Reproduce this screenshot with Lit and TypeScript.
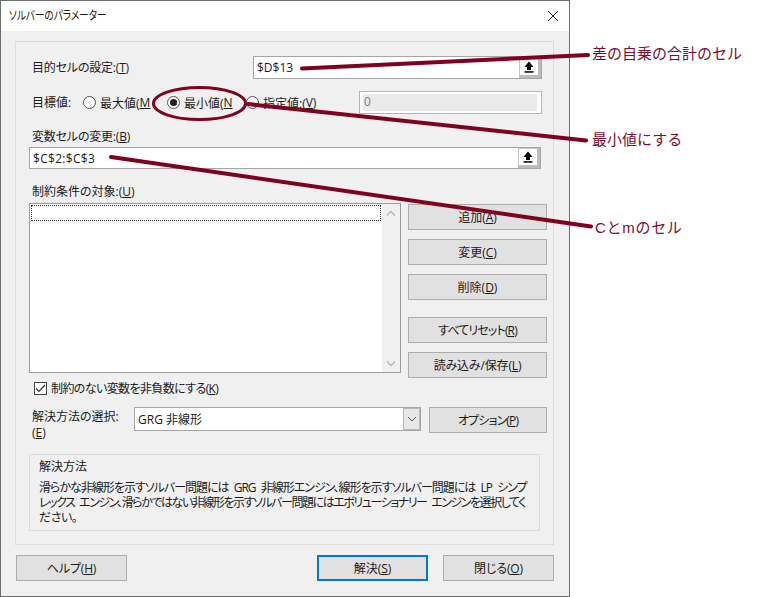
import { LitElement, html, css, svg } from "lit";
import { customElement } from "lit/decorators.js";

const upIcon = html`<svg class="up" width="10" height="12" viewBox="0 0 10 12"><path d="M5 0.5 L9.5 6 H7 V9 H3 V6 H0.5 Z" fill="#000"/><rect x="0.5" y="10.2" width="9" height="1.5" fill="#000"/></svg>`;

@customElement("app-root")
export class AppRoot extends LitElement {
  static styles = css`
    :host { display: block; width: 766px; height: 597px; position: relative; overflow: hidden; background: #fff;
      font-family: "Open Sans", "Noto Sans CJK JP", sans-serif; font-size: 12px; color: #1a1a1a; font-feature-settings: "palt"; }
    * { box-sizing: border-box; }
    .window { width: 570px; height: 597px; border: 1px solid #6e6e6e; background: #f0f0f0; display: flex; flex-direction: column; }
    .title { height: 30px; background: #fff; display: flex; align-items: center; justify-content: space-between; padding: 0 8px 2px 8px; flex: none; }
    .title span { display: inline-block; transform: scaleX(0.8); transform-origin: left center; }
    .title svg { display: block; margin-right: 2px; margin-top: 2px; }
    .panel { margin: 10px 15px 0 14px; height: 504px; border: 1px solid #dcdcdc; padding: 0 5px 0 13px; flex: none; }
    .label { padding-left: 3px; height: 16px; line-height: 16px; white-space: nowrap; }
    .t1 { letter-spacing: -0.2px; }
    .row { display: flex; align-items: center; justify-content: space-between; }
    .r1 { margin-top: 14px; padding-right: 6px; height: 23px; }
    .r2 { margin-top: 12px; padding-right: 6px; height: 23px; }
    .field { height: 22px; border: 1px solid #a6a6a6; background: #fff; display: flex; align-items: center; justify-content: space-between; padding-left: 3px; }
    .field.wide { width: 512px; margin-top: 2px; letter-spacing: 0.3px; }
    .field.narrow { width: 289px; height: 23px; }
    .upbtn { width: 22px; height: 20px; background: #fff; border: 1px solid #c4c4c4; border-right: 3px solid #bcbcbc; border-bottom: 3px solid #bcbcbc; display: flex; align-items: center; justify-content: center; }
    .up { display: block; }
    .goal { display: flex; align-items: center; }
    .goal .label { width: 54px; }
    .opt { display: flex; align-items: center; overflow: hidden; white-space: nowrap; }
    .o1 { width: 84px; } .o2 { width: 79px; } .o3 { width: 109px; }
    .radio { width: 13px; height: 13px; border-radius: 50%; border: 1px solid #555; background: #fff; margin-right: 4px; flex: none; display: flex; align-items: center; justify-content: center; }
    .radio i { width: 7px; height: 7px; border-radius: 50%; background: #222; }
    .disabled { width: 183px; height: 23px; border: 1px solid #b5b5b5; background: #fff; padding: 2px 4px 2px 3px; }
    .disabled div { background: #eaeaea; height: 100%; padding-left: 1px; line-height: 16px; color: #7d7d7d; }
    .l3 { margin-top: 15px; }
    .l4 { margin-top: 15px; }
    .mid { display: grid; grid-template-columns: 372px 139px; column-gap: 7px; margin-top: 3px; height: 175px; }
    .list { height: 170px; border: 1px solid #9c9c9c; background: #fff; display: flex; }
    .items { flex: 1; padding: 1px; }
    .focus { height: 16px; border: 1px dotted #333; }
    .sb { width: 18px; background: #f0f0f0; display: flex; flex-direction: column; justify-content: space-between; align-items: center; padding: 6px 0 5px; }
    .sb svg { display: block; }
    .btns { display: flex; flex-direction: column; padding-top: 1px; }
    .btn { height: 26px; border: 1px solid #adadad; background: #e1e1e1; display: flex; align-items: center; justify-content: center; white-space: nowrap; color: #1a1a1a; flex: none; }
    .btn span { display: block; }
    .b8 span { letter-spacing: -0.85px; }
    .b1 span { letter-spacing: -0.15px; }
    .g9 { margin-top: 9px; } .g17 { margin-top: 17px; }
    .check { display: flex; align-items: center; margin: 3px 0 0 5px; height: 14px; white-space: nowrap; letter-spacing: -0.6px; }
    .box { width: 13px; height: 13px; border: 1px solid #444; background: #fff; margin-right: 4px; display: flex; align-items: center; justify-content: center; flex: none; }
    .method { display: flex; margin-top: 12px; height: 40px; }
    .method .label { width: 105px; height: 32px; white-space: normal; padding-top: 2px; }
    .select { width: 287px; height: 24px; border: 1px solid #a6a6a6; background: #fff; display: flex; justify-content: space-between; padding-left: 3px; align-items: center; }
    .arrow { width: 17px; height: 22px; background: #e8e8e8; border: 1px solid #b8b8b8; display: flex; align-items: center; justify-content: center; }
    .method .btn { width: 118px; margin-left: 8px; }
    .desc { width: 511px; height: 77px; margin-top: 7px; border: 1px solid #dcdcdc; padding: 4px 9px; line-height: 15px; white-space: nowrap; }
    .desc p { margin: 0; }
    .desc .h1 { margin-bottom: 5px; line-height: 16px; }
    .ln1 { letter-spacing: -1px; word-spacing: 3px; }
    .ln2 { letter-spacing: -1.45px; word-spacing: 3px; }
    .ln3 { letter-spacing: -0.5px; }
    .foot { display: flex; margin: 10px 15px 0 15px; }
    .foot .btn { width: 111px; }
    .foot .spacer { flex: 1; }
    .foot .def { border: 2px solid #0078d7; margin-right: 15px; }
    .overlay { position: absolute; left: 0; top: 0; pointer-events: none; }
    .note { position: absolute; color: #7c1030; font-size: 15px; line-height: 20px; white-space: nowrap; font-feature-settings: normal; font-family: "Liberation Sans", "Noto Sans CJK JP", sans-serif; }
    .n1 { left: 592px; top: 44px; } .n2 { left: 592px; top: 130px; } .n3 { left: 595px; top: 218px; letter-spacing: 0.7px; }
  `;

  render() {
    return html`
      <div class="window">
        <div class="title"><span>ソルバーのパラメーター</span>
          <svg width="12" height="12" viewBox="0 0 12 12"><path d="M1 1 L11 11 M11 1 L1 11" stroke="#222" stroke-width="1" fill="none"/></svg>
        </div>
        <div class="panel">
          <div class="row r1"><span class="label t1">目的セルの設定:(<u>T</u>)</span>
            <div class="field narrow"><span>$D$13</span><div class="upbtn">${upIcon}</div></div></div>
          <div class="row r2">
            <div class="goal"><span class="label">目標値:</span>
              <div class="opt o1"><span class="radio"></span>最大値(<u>M</u></div>
              <div class="opt o2"><span class="radio"><i></i></span>最小値(<u>N</u></div>
              <div class="opt o3"><span class="radio"></span>指定値:(<u>V</u>)</div>
            </div>
            <div class="disabled"><div>0</div></div>
          </div>
          <div class="label l3 t1">変数セルの変更:(<u>B</u>)</div>
          <div class="field wide"><span>$C$2:$C$3</span><div class="upbtn">${upIcon}</div></div>
          <div class="label l4">制約条件の対象:(<u>U</u>)</div>
          <div class="mid">
            <div class="list">
              <div class="items"><div class="focus"></div></div>
              <div class="sb">
                <svg width="10" height="7" viewBox="0 0 10 7"><path d="M1 5.5 L5 1.5 L9 5.5" stroke="#b5b5b5" stroke-width="1.4" fill="none"/></svg>
                <svg width="10" height="7" viewBox="0 0 10 7"><path d="M1 1.5 L5 5.5 L9 1.5" stroke="#b5b5b5" stroke-width="1.4" fill="none"/></svg>
              </div>
            </div>
            <div class="btns">
              <div class="btn"><span>追加(<u>A</u>)</span></div>
              <div class="btn g9"><span>変更(<u>C</u>)</span></div>
              <div class="btn g9"><span>削除(<u>D</u>)</span></div>
              <div class="btn g17 b8"><span>すべてリセット(<u>R</u>)</span></div>
              <div class="btn g9 b1"><span>読み込み/保存(<u>L</u>)</span></div>
            </div>
          </div>
          <div class="check"><span class="box"><svg width="11" height="9" viewBox="0 0 11 9"><path d="M1 4.5 L4 7.5 L10 1" stroke="#333" stroke-width="1.2" fill="none"/></svg></span><span>制約のない変数を非負数にする(<u>K</u>)</span></div>
          <div class="method">
            <div class="label">解決方法の選択:<br>(<u>E</u>)</div>
            <div class="select"><span>GRG 非線形</span><div class="arrow"><svg width="10" height="6" viewBox="0 0 10 6"><path d="M1 1 L5 5 L9 1" stroke="#555" stroke-width="1" fill="none"/></svg></div></div>
            <div class="btn b8"><span>オプション(<u>P</u>)</span></div>
          </div>
          <div class="desc">
            <p class="h1">解決方法</p>
            <p class="ln1">滑らかな非線形を示すソルバー問題には GRG 非線形エンジン、線形を示すソルバー問題には LP シンプ</p>
            <p class="ln2">レックス エンジン、滑らかではない非線形を示すソルバー問題にはエボリューショナリー エンジンを選択してく</p>
            <p class="ln3">ださい。</p>
          </div>
        </div>
        <div class="foot">
          <div class="btn b1"><span>ヘルプ(<u>H</u>)</span></div>
          <div class="spacer"></div>
          <div class="btn def"><span>解決(<u>S</u>)</span></div>
          <div class="btn b1"><span>閉じる(<u>O</u>)</span></div>
        </div>
      </div>
      <svg class="overlay" width="766" height="597" viewBox="0 0 766 597">
        ${svg`<g stroke="#800020" fill="none" stroke-linecap="round">
          <path d="M302 68.5 L588 55" stroke-width="4"/>
          <path d="M248 104 L586 140.5" stroke-width="4"/>
          <path d="M111 157 L591 226.5" stroke-width="4"/>
          <ellipse cx="199.5" cy="103.5" rx="46" ry="16" stroke-width="3"/>
        </g>`}
      </svg>
      <div class="note n1">差の自乗の合計のセル</div>
      <div class="note n2">最小値にする</div>
      <div class="note n3">Cとmのセル</div>
    `;
  }
}
